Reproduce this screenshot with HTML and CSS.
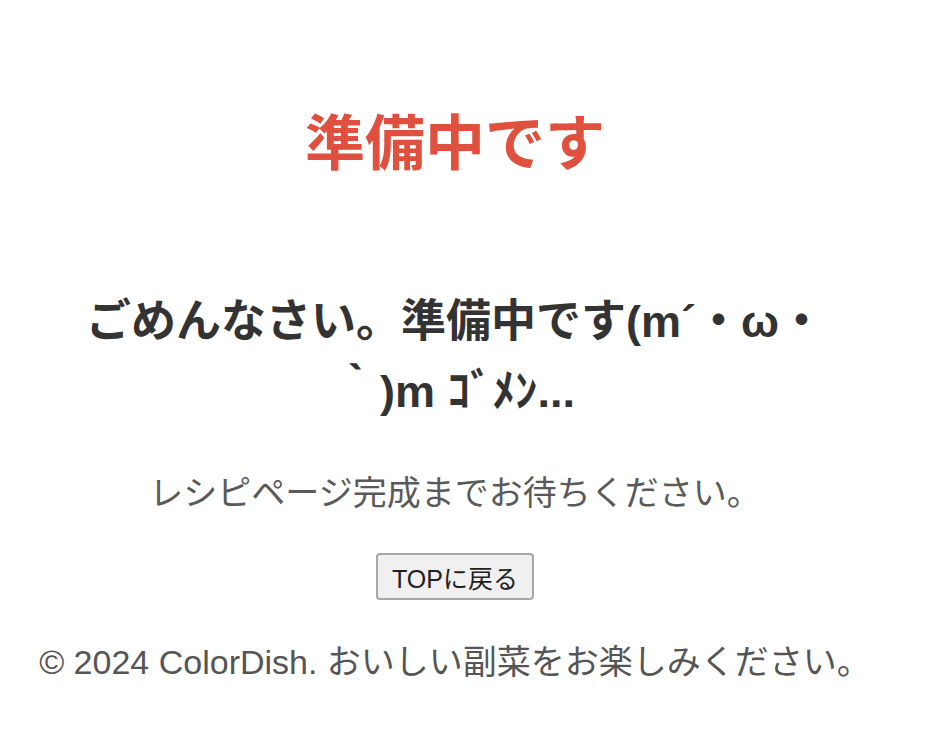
FILE: index.html
```html
<!DOCTYPE html>
<html lang="ja">
<head>
<meta charset="utf-8">
<title>準備中です</title>
<link rel="stylesheet" href="styles.css">
</head>
<body>
<main class="page">
  <h1 class="title">準備中です</h1>
  <h2 class="apology">ごめんなさい。準備中です(m´・ω・｀)m ｺﾞﾒﾝ...</h2>
  <p class="note">レシピページ完成までお待ちください。</p>
  <button class="top-btn" type="button">TOPに戻る</button>
  <footer class="footer">© 2024 ColorDish. おいしい副菜をお楽しみください。</footer>
</main>
</body>
</html>
```
FILE: styles.css
```css
html, body {
  margin: 0;
  background: #ffffff;
}
body {
  font-family: "Liberation Sans", "Noto Sans CJK JP", sans-serif;
  color: #333;
}
.page {
  display: flex;
  flex-direction: column;
  align-items: center;
  text-align: center;
  padding: 108px 42px 0 0;
}
.title {
  margin: 0;
  font-size: 60px;
  line-height: 74px;
  font-weight: 700;
  color: #e0503e;
}
.apology {
  margin: 105px 0 0;
  max-width: 790px;
  font-size: 45px;
  line-height: 70px;
  font-weight: 700;
  color: #333;
}
.note {
  margin: 44px 0 0;
  font-size: 34px;
  line-height: 44px;
  color: #5a5a5a;
}
.top-btn {
  margin-top: 38px;
  font-family: "Liberation Sans", "Noto Sans CJK JP", sans-serif;
  font-size: 25px;
  color: #222;
  background: #f0f0f0;
  border: 2px solid #a8a8a8;
  border-radius: 4px;
  padding: 0 14px;
  height: 47px;
}
.footer {
  margin-top: 42px;
  font-size: 34px;
  line-height: 40px;
  color: #555;
  white-space: nowrap;
}
```
